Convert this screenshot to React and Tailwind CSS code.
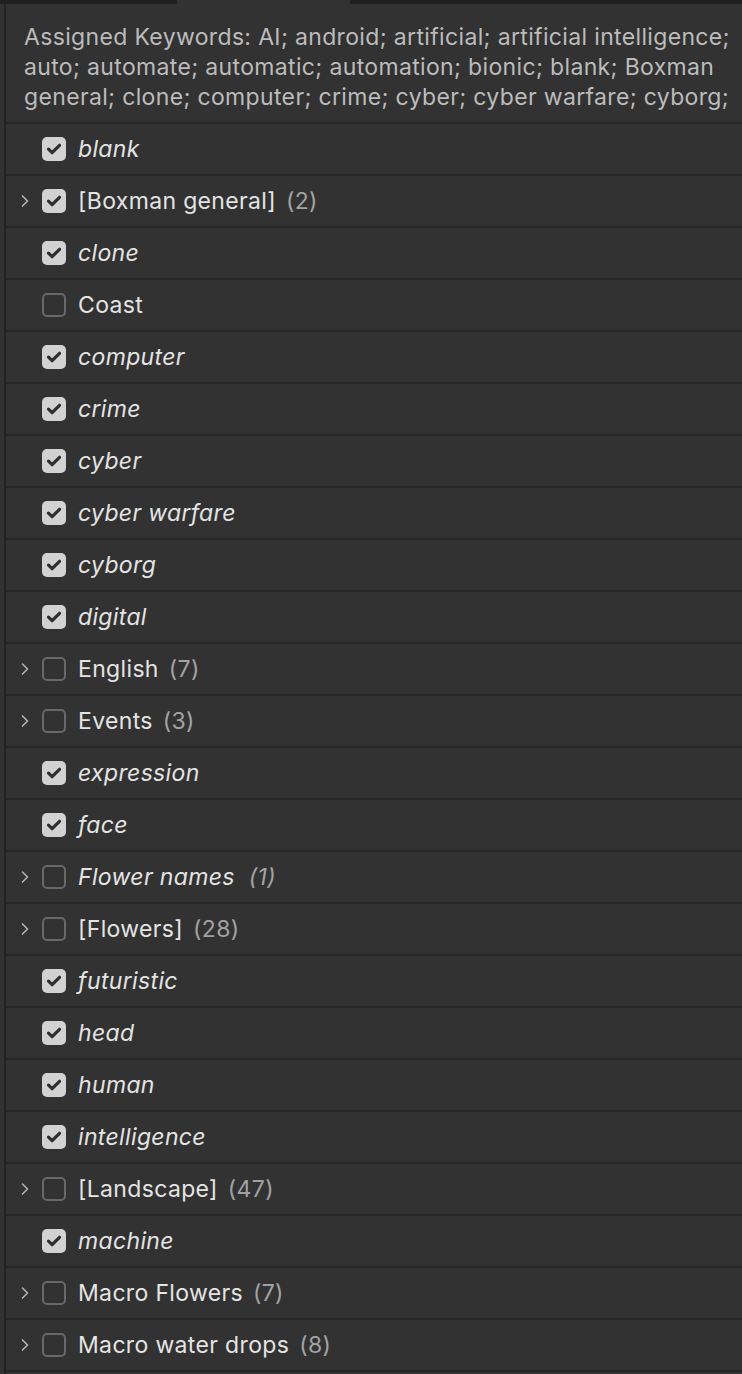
const rows = [
  { label: "blank", checked: true },
  { label: "[Boxman general]", count: 2, checked: true, group: true },
  { label: "clone", checked: true },
  { label: "Coast" },
  { label: "computer", checked: true },
  { label: "crime", checked: true },
  { label: "cyber", checked: true },
  { label: "cyber warfare", checked: true },
  { label: "cyborg", checked: true },
  { label: "digital", checked: true },
  { label: "English", count: 7, group: true },
  { label: "Events", count: 3, group: true },
  { label: "expression", checked: true },
  { label: "face", checked: true },
  { label: "Flower names", count: 1, group: true, italic: true },
  { label: "[Flowers]", count: 28, group: true },
  { label: "futuristic", checked: true },
  { label: "head", checked: true },
  { label: "human", checked: true },
  { label: "intelligence", checked: true },
  { label: "[Landscape]", count: 47, group: true },
  { label: "machine", checked: true },
  { label: "Macro Flowers", count: 7, group: true },
  { label: "Macro water drops", count: 8, group: true },
];

const Chevron = () => (
  <svg className="w-[10px] h-[14px] text-[#b4b4b4]" viewBox="0 0 10 14" fill="none">
    <path d="M2.5 2l5 5-5 5" stroke="currentColor" strokeWidth="1.6" strokeLinecap="round" strokeLinejoin="round" />
  </svg>
);

const Checkbox = ({ checked }) =>
  checked ? (
    <div className="w-6 h-6 shrink-0 rounded-[5px] bg-[#d2d2d2] flex items-center justify-center">
      <svg className="w-[18px] h-[18px]" viewBox="0 0 18 18" fill="none">
        <path d="M3.5 9.2l3.6 3.5L14.5 5.3" stroke="#2e2e2e" strokeWidth="3.2" strokeLinecap="round" strokeLinejoin="round" />
      </svg>
    </div>
  ) : (
    <div className="w-6 h-6 shrink-0 rounded-[5px] border-2 border-[#686868]" />
  );

const KeywordRow = ({ row }) => {
  const italic = row.italic || (row.checked && !row.group);
  return (
    <div className="h-[52px] border-b-2 border-[#262626] flex items-center shrink-0">
      <div className="w-[36px] shrink-0 flex justify-end pr-[12px]">{row.group && <Chevron />}</div>
      <Checkbox checked={row.checked} />
      <div className={`ml-3 text-[23px] tracking-[0.015em] leading-[28px] text-[#e4e4e4] whitespace-nowrap ${italic ? "italic" : ""}`}>
        {row.label}
        {row.count !== undefined && (
          <span className={`text-[#a2a2a2] ${row.italic ? "ml-[14px]" : "ml-[10px]"}`}>({row.count})</span>
        )}
      </div>
    </div>
  );
};

export default function App() {
  return (
    <div className="w-[742px] h-[1374px] overflow-hidden bg-[#323232] flex flex-col" style={{ fontFamily: "Inter, 'Noto Sans', sans-serif" }}>
      <div className="h-1 flex shrink-0">
        <div className="w-[177px] bg-[#1f1f1f]" />
        <div className="w-[173px]" />
        <div className="flex-1 bg-[#1f1f1f]" />
      </div>
      <div className="flex-1 flex pl-1 min-h-0">
        <div className="flex-1 flex flex-col border-l-2 border-[#222222] min-h-0">
          <div className="h-[120px] shrink-0 border-b-2 border-[#262626] pl-[18px] pr-2 pt-[18px]">
            <div className="h-[90px] overflow-hidden text-[23px] tracking-[0.015em] leading-[30px] text-[#bcbcbc]">
              Assigned Keywords: AI; android; artificial; artificial intelligence; auto; automate; automatic; automation; bionic; blank; Boxman general; clone; computer; crime; cyber; cyber warfare; cyborg; digital; expression; face; futuristic; head; human; intelligence; machine
            </div>
          </div>
          {rows.map((r) => (
            <KeywordRow key={r.label} row={r} />
          ))}
        </div>
      </div>
    </div>
  );
}
